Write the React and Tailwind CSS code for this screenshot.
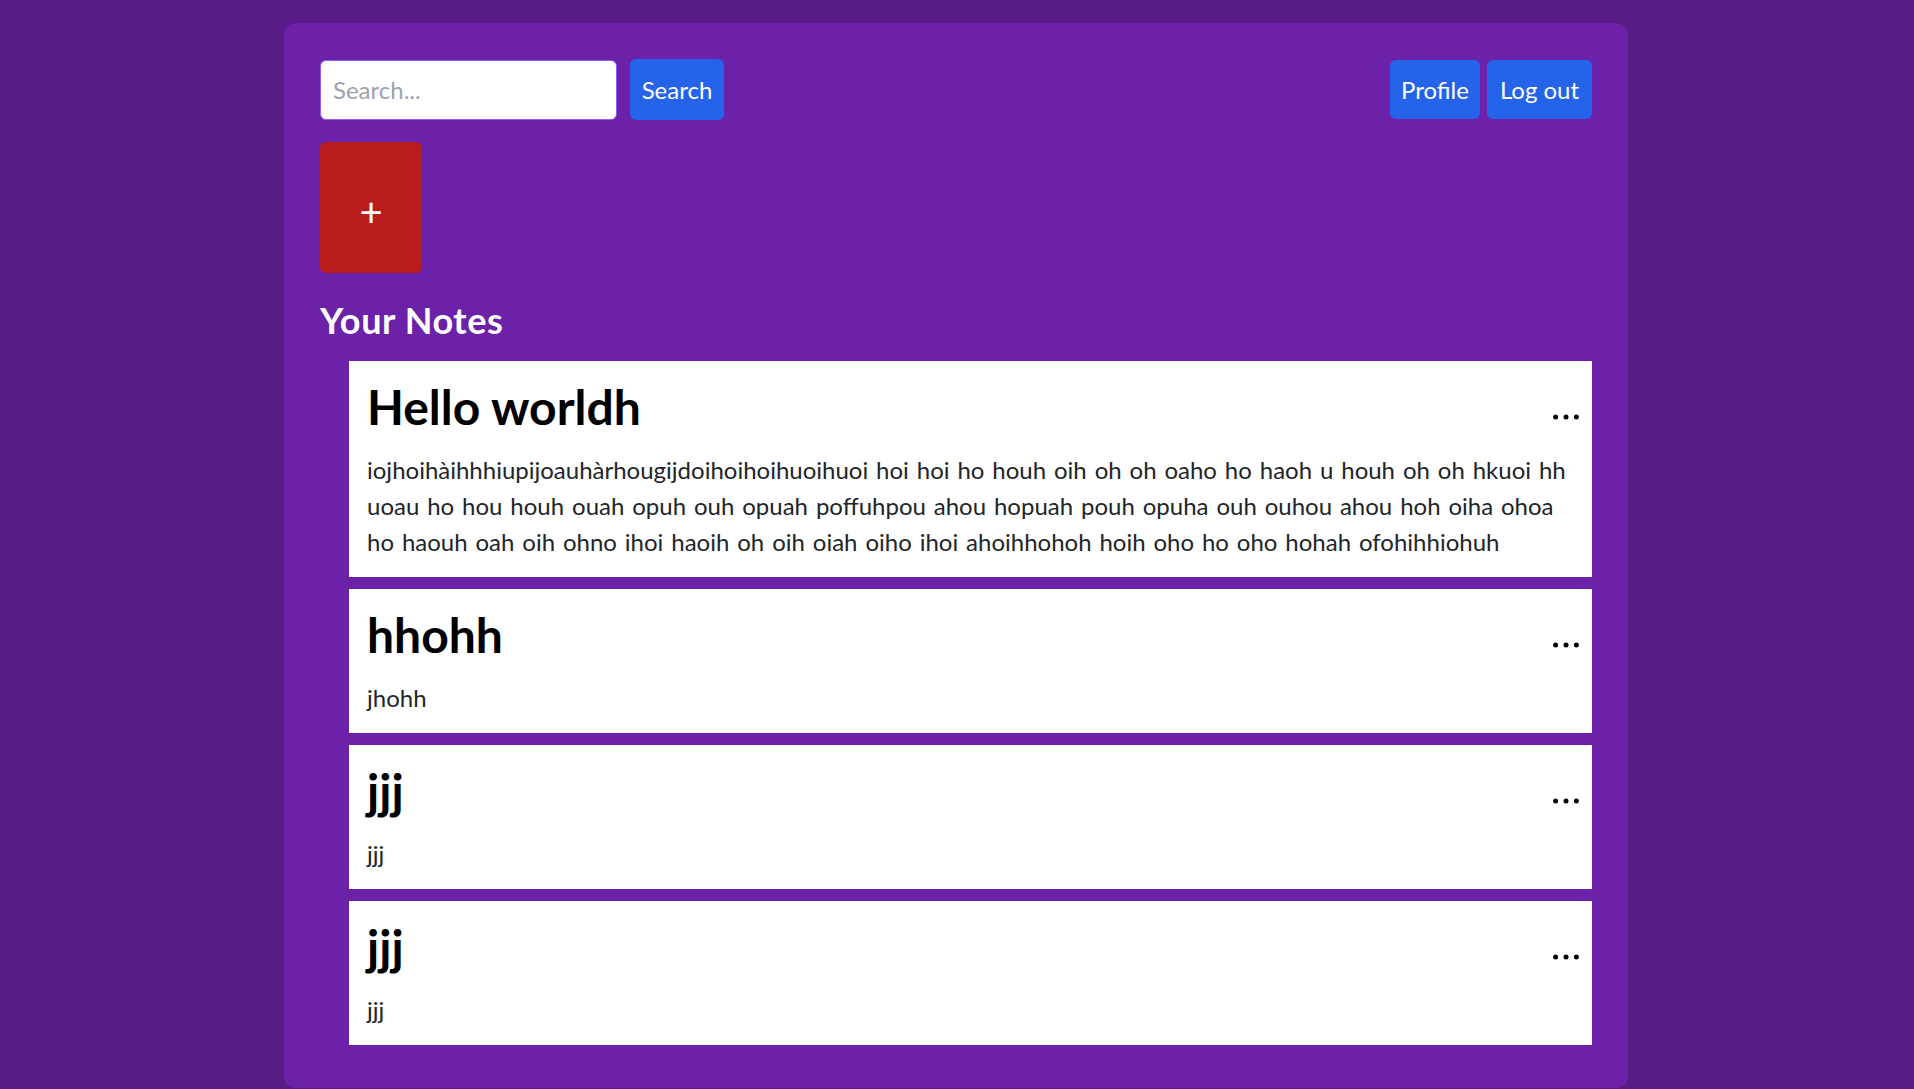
import React from "react";

const notes = [
  {
    title: "Hello worldh",
    lines: [
      "iojhoihàihhhiupijoauhàrhougijdoihoihoihuoihuoi hoi hoi ho houh oih oh oh oaho ho haoh u houh oh oh hkuoi hh",
      "uoau ho hou houh ouah opuh ouh opuah poffuhpou ahou hopuah pouh opuha ouh ouhou ahou hoh oiha ohoa",
      "ho haouh oah oih ohno ihoi haoih oh oih oiah oiho ihoi ahoihhohoh hoih oho ho oho hohah ofohihhiohuh",
    ],
  },
  { title: "hhohh", lines: ["jhohh"] },
  { title: "jjj", lines: ["jjj"] },
  { title: "jjj", lines: ["jjj"] },
];

function Dots() {
  return (
    <svg width="26" height="6" viewBox="0 0 26 6" fill="#000">
      <circle cx="2.6" cy="3" r="2.5" />
      <circle cx="13" cy="3" r="2.5" />
      <circle cx="23.4" cy="3" r="2.5" />
    </svg>
  );
}

export default function App() {
  return (
    <div className="min-h-screen bg-[#581c87] pt-[23px] font-['Lato','Open_Sans',sans-serif]">
      <div className="ml-[284px] w-[1344px] rounded-[12px] bg-[#6b21a8] px-[36px] pt-[36px] pb-[43px]">
        <div className="flex items-center justify-between">
          <div className="flex items-center gap-[13px]">
            <input
              type="text"
              placeholder="Search..."
              className="h-[60px] w-[297px] rounded-[6px] border border-[#8b5cf6] bg-white px-[12px] text-[24px] text-black outline-none placeholder:text-[#9ca3af]"
            />
            <button className="h-[61px] w-[94px] rounded-[6px] bg-[#2563eb] text-[24px] text-white">
              Search
            </button>
          </div>
          <div className="flex items-center gap-[7px]">
            <button className="h-[59px] w-[90px] rounded-[6px] bg-[#2563eb] text-[24px] text-white">
              Profile
            </button>
            <button className="h-[59px] w-[105px] rounded-[6px] bg-[#2563eb] text-[24px] text-white">
              Log out
            </button>
          </div>
        </div>

        <button className="mt-[22px] flex h-[131px] w-[102px] items-center justify-center rounded-[6px] bg-[#b91c1c] pt-[9px] text-[40px] text-white">
          +
        </button>

        <h2 className="mt-[23px] text-[36px] leading-[48px] font-bold tracking-[0.6px] text-white">
          Your Notes
        </h2>

        <ul className="mt-[17px] ml-[29px] flex flex-col gap-[12px]">
          {notes.map((n, i) => (
            <li key={i} className="flex bg-white pt-[17px] pr-[13px] pb-[17px] pl-[18px]">
              <div className="min-w-0 flex-1">
                <h3 className="text-[48px] leading-[58px] font-bold text-black">{n.title}</h3>
                <p className="mt-[16px] text-[24px] leading-[36px] text-[#212529] [word-spacing:1.75px]">
                  {n.lines.map((l, j) => (
                    <span key={j} className="block whitespace-nowrap">
                      {l}
                    </span>
                  ))}
                </p>
              </div>
              <button className="mt-[36px] h-[6px] shrink-0 leading-none">
                <Dots />
              </button>
            </li>
          ))}
        </ul>
      </div>
    </div>
  );
}
